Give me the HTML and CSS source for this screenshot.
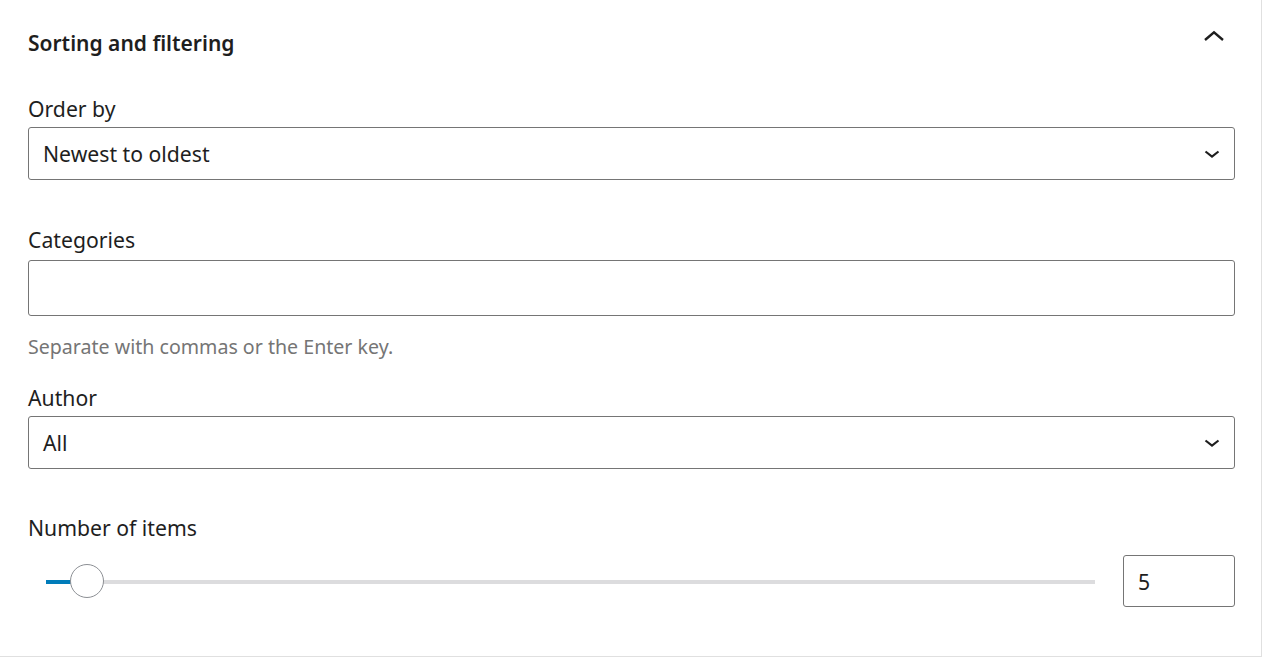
FILE: index.html
```html
<!DOCTYPE html>
<html lang="en">
<head>
<meta charset="utf-8">
<title>Sorting and filtering</title>
<link rel="stylesheet" href="styles.css">
</head>
<body>
<div class="panel">
  <div class="header">
    <h2 class="title">Sorting and filtering</h2>
    <svg class="toggle" width="24" height="24" viewBox="0 0 24 24" aria-hidden="true"><path d="M3 12 L12 4.4 L21 12" fill="none" stroke="#1e1e1e" stroke-width="2.4"/></svg>
  </div>

  <div class="field field-order">
    <label class="label">Order by</label>
    <div class="select">
      <span class="select-value">Newest to oldest</span>
      <svg class="chev" width="16" height="10" viewBox="0 0 16 10" aria-hidden="true"><path d="M1.5 2.5 L8 7.5 L14.5 2.5" fill="none" stroke="#1e1e1e" stroke-width="2.2"/></svg>
    </div>
  </div>

  <div class="field field-cat">
    <label class="label">Categories</label>
    <div class="textbox"></div>
    <p class="help">Separate with commas or the Enter key.</p>
  </div>

  <div class="field field-author">
    <label class="label">Author</label>
    <div class="select">
      <span class="select-value">All</span>
      <svg class="chev" width="16" height="10" viewBox="0 0 16 10" aria-hidden="true"><path d="M1.5 2.5 L8 7.5 L14.5 2.5" fill="none" stroke="#1e1e1e" stroke-width="2.2"/></svg>
    </div>
  </div>

  <div class="field field-num">
    <label class="label">Number of items</label>
    <div class="range-row">
      <div class="range">
        <div class="track"></div>
        <div class="fill"></div>
        <div class="thumb"></div>
      </div>
      <div class="number">5</div>
    </div>
  </div>
</div>
</body>
</html>
```

FILE: styles.css
```css
html, body {
  margin: 0;
  padding: 0;
  background: #ffffff;
}
body {
  font-family: "Noto Sans", "Open Sans", sans-serif;
  color: #1e1e1e;
}
.panel {
  width: 1262px;
  height: 657px;
  box-sizing: border-box;
  border-right: 1px solid #e0e0e0;
  border-bottom: 1px solid #e0e0e0;
  padding: 24px 26px 0 28px;
}
.header {
  height: 38px;
  display: flex;
  align-items: center;
  justify-content: space-between;
}
.title {
  margin: 0;
  font-size: 21px;
  font-weight: 600;
  line-height: 28px;
}
.toggle {
  margin-right: 9px;
  margin-top: -6px;
}
.label {
  display: block;
  font-size: 21.2px;
  line-height: 27px;
  margin-bottom: 5px;
}
.field-order { margin-top: 33px; }
.field-cat { margin-top: 46px; }
.field-cat .label { margin-bottom: 7px; }
.field-author { margin-top: 24px; }
.field-num { margin-top: 45px; }
.field-num .label { margin-bottom: 14px; }

.select {
  height: 53px;
  box-sizing: border-box;
  border: 1px solid #757575;
  border-radius: 3px;
  display: flex;
  align-items: center;
  justify-content: space-between;
  padding: 0 14px 0 14px;
}
.select-value {
  font-size: 21.2px;
  line-height: 27px;
}
.textbox {
  height: 56px;
  box-sizing: border-box;
  border: 1px solid #757575;
  border-radius: 3px;
}
.help {
  margin: 18px 0 0 0;
  font-size: 19.6px;
  line-height: 26px;
  color: #757575;
}
.range-row {
  display: flex;
  align-items: center;
  gap: 28px;
}
.range {
  position: relative;
  flex: 1;
  height: 52px;
  margin-left: 18px;
}
.track {
  position: absolute;
  left: 0;
  right: 0;
  top: 25px;
  height: 4px;
  background: #dcdcde;
}
.fill {
  position: absolute;
  left: 0;
  width: 30px;
  top: 25px;
  height: 4px;
  background: #007cba;
}
.thumb {
  position: absolute;
  left: 24px;
  top: 9px;
  width: 34px;
  height: 34px;
  box-sizing: border-box;
  border-radius: 50%;
  border: 1px solid #8c8f94;
  background: #ffffff;
}
.number {
  width: 112px;
  height: 52px;
  box-sizing: border-box;
  border: 1px solid #757575;
  border-radius: 3px;
  display: flex;
  align-items: center;
  padding-left: 14px;
  font-size: 21.2px;
}
```
